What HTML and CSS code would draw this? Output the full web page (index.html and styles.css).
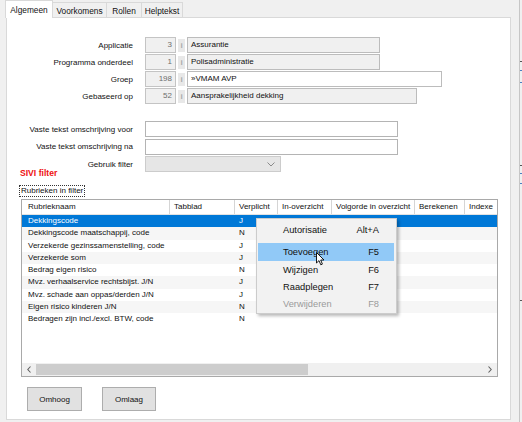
FILE: index.html
```
<!DOCTYPE html>
<html>
<head>
<meta charset="utf-8">
<link rel="stylesheet" href="styles.css">
</head>
<body>
<div class="window">
  <div class="main">
    <div class="tabs">
      <div class="tab active">Algemeen</div>
      <div class="tab t2">Voorkomens</div>
      <div class="tab t3">Rollen</div>
      <div class="tab t4">Helptekst</div>
    </div>
    <div class="panel">
      <div class="form">
        <div class="row"><div class="lbl">Applicatie</div><div class="num">3</div><div class="info">i</div><div class="txt w1">Assurantie</div></div>
        <div class="row"><div class="lbl">Programma onderdeel</div><div class="num">1</div><div class="info">i</div><div class="txt w1">Polisadministratie</div></div>
        <div class="row"><div class="lbl">Groep</div><div class="num">198</div><div class="info">i</div><div class="txt w3 white">»VMAM AVP</div></div>
        <div class="row"><div class="lbl">Gebaseerd op</div><div class="num">52</div><div class="info">i</div><div class="txt w4">Aansprakelijkheid dekking</div></div>
      </div>
      <div class="form form2">
        <div class="row"><div class="lbl">Vaste tekst omschrijving voor</div><div class="input"></div></div>
        <div class="row"><div class="lbl">Vaste tekst omschrijving na</div><div class="input"></div></div>
        <div class="row"><div class="lbl">Gebruik filter</div><div class="select"><svg width="8" height="5" viewBox="0 0 8 5"><path d="M0.5 0.5 L4 4 L7.5 0.5" fill="none" stroke="#8a8a8a" stroke-width="1"/></svg></div></div>
      </div>
      <div class="sivi">SIVI filter</div>
      <div class="legend-wrap"><span class="legend">Rubrieken in filter</span></div>
      <div class="list">
        <div class="lhead">
          <div class="c c1">Rubrieknaam</div><div class="c c2">Tabblad</div><div class="c c3">Verplicht</div><div class="c c4">In-overzicht</div><div class="c c5">Volgorde in overzicht</div><div class="c c6">Berekenen</div><div class="c c7">Indexe</div>
        </div>
        <div class="lrow sel"><div class="c c1">Dekkingscode</div><div class="c c2"></div><div class="c c3">J</div></div>
        <div class="lrow alt"><div class="c c1">Dekkingscode maatschappij, code</div><div class="c c2"></div><div class="c c3">N</div></div>
        <div class="lrow"><div class="c c1">Verzekerde gezinssamenstelling, code</div><div class="c c2"></div><div class="c c3">J</div></div>
        <div class="lrow alt"><div class="c c1">Verzekerde som</div><div class="c c2"></div><div class="c c3">J</div></div>
        <div class="lrow"><div class="c c1">Bedrag eigen risico</div><div class="c c2"></div><div class="c c3">N</div></div>
        <div class="lrow alt"><div class="c c1">Mvz. verhaalservice rechtsbijst. J/N</div><div class="c c2"></div><div class="c c3">J</div></div>
        <div class="lrow"><div class="c c1">Mvz. schade aan oppas/derden J/N</div><div class="c c2"></div><div class="c c3">J</div></div>
        <div class="lrow alt"><div class="c c1">Eigen risico kinderen J/N</div><div class="c c2"></div><div class="c c3">N</div></div>
        <div class="lrow"><div class="c c1">Bedragen zijn incl./excl. BTW, code</div><div class="c c2"></div><div class="c c3">N</div></div>
        <div class="lspace"></div>
        <div class="hscroll">
          <div class="arrow"><svg width="4" height="7" viewBox="0 0 4 7"><path d="M3.5 0.5 L0.8 3.5 L3.5 6.5" fill="none" stroke="#606060" stroke-width="1.1"/></svg></div>
          <div class="thumb"></div>
          <div class="track"></div>
          <div class="arrow"><svg width="4" height="7" viewBox="0 0 4 7"><path d="M0.5 0.5 L3.2 3.5 L0.5 6.5" fill="none" stroke="#606060" stroke-width="1.1"/></svg></div>
        </div>
      </div>
      <div class="buttons">
        <div class="btn b1">Omhoog</div>
        <div class="btn b2">Omlaag</div>
      </div>
    </div>
  </div>
  <div class="side">
    <div class="side-gap"></div>
    <div class="side-line"></div>
    <div class="side-rest">
      <div class="mark dark m1"></div>
      <div class="mark blue m2"></div>
      <div class="mark blue m3"></div>
      <div class="mark dark m4"></div>
      <div class="mark blue m5"></div>
      <div class="mark blue m6"></div>
      <div class="mark dark m7"></div>
    </div>
  </div>
</div>

<div class="menu">
  <div class="mi first"><span>Autorisatie</span><span class="sc">Alt+A</span></div>
  <div class="mi hl"><span>Toevoegen</span><span class="sc">F5</span></div>
  <div class="mi"><span>Wijzigen</span><span class="sc">F6</span></div>
  <div class="mi"><span>Raadplegen</span><span class="sc">F7</span></div>
  <div class="mi dis"><span>Verwijderen</span><span class="sc">F8</span></div>
</div>

<svg class="cursor" width="9" height="14" viewBox="0 0 9 14">
  <path d="M0.5 0.5 L0.5 11 L3 8.6 L4.8 12.8 L6.4 12.1 L4.7 8 L8 8 Z" fill="#fff" stroke="#000" stroke-width="0.9" stroke-linejoin="round"/>
</svg>
</body>
</html>
```

FILE: styles.css
```
* { box-sizing: border-box; }
html, body { margin: 0; padding: 0; }
body {
  width: 522px;
  height: 422px;
  overflow: hidden;
  background: #f0f0f0;
  font-family: "Liberation Sans", Arial, sans-serif;
  font-size: 8px;
  color: #111;
  position: relative;
}
.window { display: flex; height: 422px; }
.main { width: 511px; flex: none; }

/* tabs */
.tabs { display: flex; align-items: flex-end; height: 17px; padding-left: 5px; font-size: 8.3px; }
.tab {
  height: 15px;
  border: 1px solid #d9d9d9;
  border-bottom: none;
  border-left: none;
  background: #f0f0f0;
  display: flex;
  align-items: center;
  justify-content: center;
  padding-top: 1px;
  white-space: nowrap;
}
.tab.active {
  width: 48px;
  height: 18px;
  background: #fff;
  border-left: 1px solid #d9d9d9;
  margin-bottom: -1px;
  position: relative;
  z-index: 1;
  padding-top: 0;
}
.t2 { width: 54px; }
.t3 { width: 35px; }
.t4 { width: 41px; }

.panel {
  margin-left: 6px;
  width: 505px;
  height: 403px;
  background: #fff;
  border: 1px solid #d9d9d9;
  padding-top: 19px;
}

/* form rows */
.form { display: flex; flex-direction: column; gap: 1px; }
.form2 { margin-top: 17px; gap: 1.5px; }
.row { display: flex; align-items: center; height: 16px; }
.lbl { width: 126px; text-align: right; margin-right: 12px; flex: none; white-space: nowrap; }
.num {
  width: 31px; height: 16px;
  background: #f0f0f0;
  border: 1px solid #c4c4c4;
  color: #6d6d6d;
  text-align: right;
  padding-right: 3px;
  line-height: 14px;
}
.info {
  width: 7px; height: 13px;
  margin: 0 2px;
  background: #e8e8e8;
  color: #a8a8a8;
  text-align: center;
  line-height: 13px;
  font-weight: bold;
  font-size: 8px;
}
.txt {
  height: 16px;
  background: #f0f0f0;
  border: 1px solid #bcbcbc;
  padding-left: 3px;
  line-height: 14px;
  white-space: nowrap;
  overflow: hidden;
}
.w1 { width: 193px; }
.w3 { width: 255px; }
.w4 { width: 230px; }
.white { background: #fff; }
.input { width: 253px; height: 16px; border: 1px solid #b4b4b4; background: #fff; }
.select {
  width: 136px; height: 16px;
  border: 1px solid #cccccc;
  background: #e6e6e6;
  display: flex;
  align-items: center;
  justify-content: flex-end;
  padding-right: 5px;
}

.sivi {
  margin-top: -4px;
  padding-left: 13px;
  color: #ee1111;
  font-weight: bold;
  font-size: 8.6px;
  line-height: 10px;
}
.legend-wrap { margin-top: 7px; padding-left: 12px; height: 12px; }
.legend {
  display: inline-block;
  border: 1px dotted #333;
  height: 12px;
  line-height: 10px;
  padding: 0 1px;
  white-space: nowrap;
}

/* list */
.list {
  margin-top: 2px;
  margin-left: 14px;
  width: 477px;
  height: 178px;
  border: 1px solid #a9a9a9;
  display: flex;
  flex-direction: column;
  overflow: hidden;
}
.lhead { display: flex; height: 15px; flex: none; border-bottom: 1px solid #e3e3e3; }
.lhead .c { border-right: 1px solid #d5d5d5; line-height: 14px; }
.c { flex: none; white-space: nowrap; overflow: hidden; padding-left: 4px; }
.c1 { width: 148px; padding-left: 6px; }
.c2 { width: 65px; }
.c3 { width: 43px; }
.c4 { width: 54px; }
.c5 { width: 83px; }
.c6 { width: 50px; }
.c7 { width: 40px; }
.lrow { display: flex; height: 12.25px; line-height: 12.25px; flex: none; }
.lrow.alt { background: #f6f6f6; }
.lrow.sel { background: #0078d7; color: #fff; }
.lspace { flex: 1; }
.hscroll { display: flex; height: 13px; flex: none; background: #f0f0f0; }
.arrow { width: 14px; display: flex; align-items: center; justify-content: center; flex: none; }
.thumb { width: 272px; margin: 1px 0; background: #cdcdcd; }
.track { flex: 1; }

/* buttons */
.buttons { display: flex; gap: 20px; margin-top: 10px; padding-left: 20px; }
.btn {
  height: 24px;
  background: #e1e1e1;
  border: 1px solid #adadad;
  display: flex;
  align-items: center;
  justify-content: center;
}
.b1 { width: 55px; }
.b2 { width: 54px; }

/* side strip */
.side { flex: 1; display: flex; }
.side-gap { width: 8px; }
.side-line { width: 1px; background: #c6c6c6; }
.side-rest { flex: 1; display: flex; flex-direction: column; }
.mark { height: 1px; width: 3px; }
.mark.blue { background: #4a7fc1; }
.mark.dark { background: #555; }
.m1 { margin-top: 61px; }
.m2 { margin-top: 8px; }
.m3 { margin-top: 11px; }
.m4 { margin-top: 82px; }
.m5 { margin-top: 7px; }
.m6 { margin-top: 9px; }
.m7 { margin-top: 116px; }

/* context menu (overlay) */
.menu {
  position: absolute;
  left: 256px;
  top: 218px;
  width: 141px;
  height: 96px;
  background: #f2f2f2;
  border: 1px solid #cccccc;
  box-shadow: 2px 2px 3px rgba(0,0,0,0.28);
  padding: 2px 2px 2px 1px;
  font-size: 9.3px;
}
.mi {
  height: 17px;
  display: flex;
  align-items: center;
  justify-content: space-between;
  padding-left: 25px;
  padding-right: 15px;
}
.mi.first { height: 18px; margin-bottom: 4px; }
.mi.hl { height: 18px; background: #91c9f7; }
.mi.dis { color: #9a9a9a; }

.cursor { position: absolute; left: 316px; top: 252px; }
```
